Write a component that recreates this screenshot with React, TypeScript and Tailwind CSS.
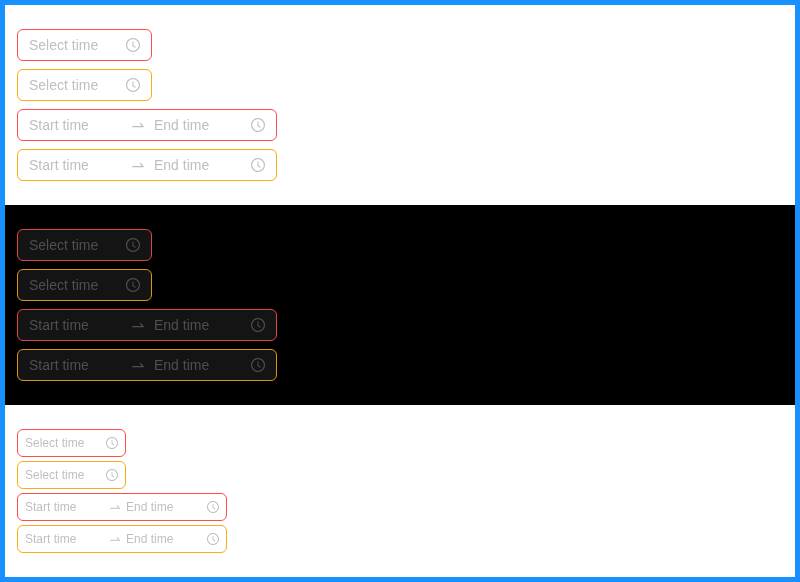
type Theme = 'light' | 'dark' | 'compact';

const placeholder: Record<Theme, string> = {
  light: 'text-[#bfbfbf]',
  dark: 'text-[#4f4f4f]',
  compact: 'text-[#bfbfbf]',
};

const border: Record<Theme, { error: string; warning: string }> = {
  light: { error: 'border-[#ff4d4f]', warning: 'border-[#faad14]' },
  dark: { error: 'border-[#dc4446]', warning: 'border-[#d89614]' },
  compact: { error: 'border-[#ff4d4f]', warning: 'border-[#faad14]' },
};

function Clock() {
  return (
    <svg viewBox="64 64 896 896" width="1em" height="1em" fill="currentColor" className="shrink-0">
      <path d="M512 64C264.600 64 64 264.600 64 512s200.600 448 448 448 448-200.600 448-448S759.400 64 512 64zm0 820c-205.400 0-372-166.600-372-372s166.600-372 372-372 372 166.600 372 372-166.600 372-372 372z" />
      <path d="M686.700 638.600L544.100 535.500V288c0-4.400-3.600-8-8-8H488c-4.400 0-8 3.600-8 8v275.400c0 2.600 1.200 5 3.300 6.500l165.400 120.600c3.600 2.600 8.600 1.800 11.200-1.700l28.600-39c2.600-3.700 1.800-8.700-1.800-11.200z" />
    </svg>
  );
}

function Arrow() {
  return (
    <svg viewBox="0 0 1024 1024" width="1em" height="1em" fill="currentColor" className="shrink-0">
      <path d="M873.100 596.200l-164-208A32 32 0 00684 376h-64.800c-6.700 0-10.400 7.700-6.300 13l144.300 183H152c-4.400 0-8 3.600-8 8v60c0 4.400 3.600 8 8 8h695.900c26.800 0 41.700-30.800 25.200-51.800z" />
    </svg>
  );
}

function Picker({ theme, status, range }: { theme: Theme; status: 'error' | 'warning'; range?: boolean }) {
  const small = theme === 'compact';
  const size = small
    ? `h-7 px-[7px] text-xs ${range ? 'w-[210px]' : 'w-[109px]'}`
    : `h-8 px-[11px] text-sm ${range ? 'w-[260px]' : 'w-[135px]'}`;
  const background = theme === 'dark' ? 'bg-[#141414]' : 'bg-white';
  return (
    <div className={`flex items-center rounded-md border ${size} ${background} ${border[theme][status]} ${placeholder[theme]}`}>
      <span className="flex-1 will-change-transform">{range ? 'Start time' : 'Select time'}</span>
      {range && (
        <>
          <span className={small ? 'px-1 text-sm' : 'px-2 text-base'}>
            <Arrow />
          </span>
          <span className="flex-1 will-change-transform">End time</span>
        </>
      )}
      <span className={small && range ? 'ml-0.5' : 'ml-1'}>
        <Clock />
      </span>
    </div>
  );
}

function Panel({ theme }: { theme: Theme }) {
  return (
    <section
      className={`flex flex-col px-3 py-6 ${theme === 'dark' ? 'bg-black' : 'bg-white'} ${theme === 'compact' ? 'gap-1' : 'gap-2'}`}
    >
      <Picker theme={theme} status="error" />
      <Picker theme={theme} status="warning" />
      <Picker theme={theme} status="error" range />
      <Picker theme={theme} status="warning" range />
    </section>
  );
}

export default function App() {
  return (
    <main className="h-[582px] w-[800px] border-[5px] border-[#1890ff] font-['Liberation_Sans',Arial,sans-serif]">
      <Panel theme="light" />
      <Panel theme="dark" />
      <Panel theme="compact" />
    </main>
  );
}
